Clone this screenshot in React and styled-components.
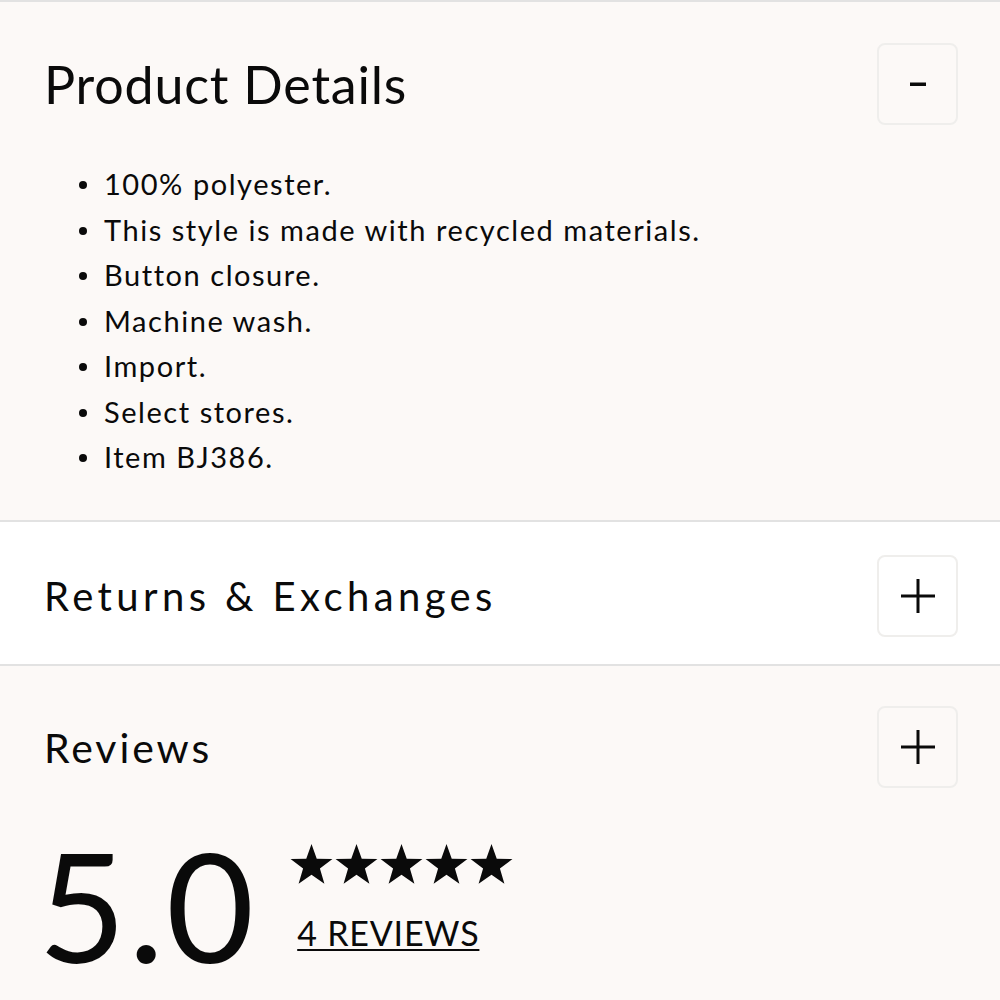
import React from 'react';
import styled, {createGlobalStyle} from 'styled-components';

const GlobalStyle = createGlobalStyle`
    html, body {
        margin: 0;
        padding: 0;
        background: #fcf9f7;
        font-family: Lato, "Open Sans", sans-serif;
        color: #0a0a0a;
    }
`

const Page = styled.div`
    width: 1000px;
    height: 1000px;
    overflow: hidden;
    border-top: 2px solid #e2e2e2;
    box-sizing: border-box;
`

const Section = styled.section`
    background: ${props => props.white ? '#ffffff' : '#fcf9f7'};
    border-bottom: ${props => props.last ? 'none' : '2px solid #e2e2e2'};
    padding: ${props => props.pad || '40px 42px 0 44px'};
    height: ${props => props.h}px;
    box-sizing: border-box;
`

const Header = styled.div`
    display: flex;
    align-items: center;
    justify-content: space-between;
`

const Title = styled.h2`
    margin: 0;
    font-weight: 400;
    font-size: ${props => props.size || 40}px;
    letter-spacing: ${props => props.spacing || 0}px;
`

const ToggleButton = styled.button`
    width: 81px;
    height: 82px;
    border: 2px solid #efeeec;
    border-radius: 8px;
    background: transparent;
    display: flex;
    align-items: center;
    justify-content: center;
    padding: 0;
    color: #0a0a0a;
`

const List = styled.ul`
    margin: 36px 0 0 0;
    padding-left: 60px;
    list-style: none;
`

const Item = styled.li`
    position: relative;
    font-size: 29px;
    line-height: 45.5px;
    letter-spacing: 1.55px;
    &::before {
        content: '';
        position: absolute;
        left: -25px;
        top: 20px;
        width: 8px;
        height: 8px;
        border-radius: 50%;
        background: #0a0a0a;
    }
`

const Rating = styled.div`
    display: flex;
    align-items: flex-start;
    gap: 33px;
    margin-top: 40px;
`

const Score = styled.div`
    font-size: 152px;
    line-height: 1;
    letter-spacing: 2px;
    margin-left: -6px;
`

const Meta = styled.div`
    display: flex;
    flex-direction: column;
    gap: 26px;
    padding-top: 15px;
`

const Stars = styled.div`
    display: flex;
`

const ReviewsLink = styled.a`
    margin-left: 8px;
    font-size: 34px;
    color: #0a0a0a;
    text-decoration: underline;
    text-decoration-thickness: 2px;
    text-underline-offset: 3px;
    letter-spacing: 0.8px;
`

const Minus = () => (
    <svg width="20" height="20" viewBox="0 0 20 20">
        <rect x="2" y="8.5" width="16" height="3.5" fill="#0a0a0a"/>
    </svg>
)

const Plus = () => (
    <svg width="34" height="34" viewBox="0 0 34 34">
        <rect x="0" y="15.5" width="34" height="3" fill="#0a0a0a"/>
        <rect x="15.5" y="0" width="3" height="34" fill="#0a0a0a"/>
    </svg>
)

const Star = () => (
    <svg width="45" height="43" viewBox="0 0 24 23">
        <path d="M12 0.5 L14.8 8.4 L23.2 8.6 L16.5 13.7 L18.9 21.8 L12 17 L5.1 21.8 L7.5 13.7 L0.8 8.6 L9.2 8.4 Z" fill="#0a0a0a"/>
    </svg>
)

const details = [
    '100% polyester.',
    'This style is made with recycled materials.',
    'Button closure.',
    'Machine wash.',
    'Import.',
    'Select stores.',
    'Item BJ386.',
]

const App = () => {
    return (
        <Page>
            <GlobalStyle/>
            <Section h={520} pad="41px 42px 0 44px">
                <Header>
                    <Title size={52} spacing={0.8}>Product Details</Title>
                    <ToggleButton><Minus/></ToggleButton>
                </Header>
                <List>
                    {details.map(d => <Item key={d}>{d}</Item>)}
                </List>
            </Section>
            <Section white h={144} pad="33px 42px 0 44px">
                <Header>
                    <Title size={40} spacing={4.4}>Returns &amp; Exchanges</Title>
                    <ToggleButton><Plus/></ToggleButton>
                </Header>
            </Section>
            <Section last h={336} pad="40px 42px 0 44px">
                <Header>
                    <Title size={41} spacing={2.9}>Reviews</Title>
                    <ToggleButton><Plus/></ToggleButton>
                </Header>
                <Rating>
                    <Score>5.0</Score>
                    <Meta>
                        <Stars>
                            {[0, 1, 2, 3, 4].map(i => <Star key={i}/>)}
                        </Stars>
                        <ReviewsLink href="#">4 REVIEWS</ReviewsLink>
                    </Meta>
                </Rating>
            </Section>
        </Page>
    )
}

export default App;
